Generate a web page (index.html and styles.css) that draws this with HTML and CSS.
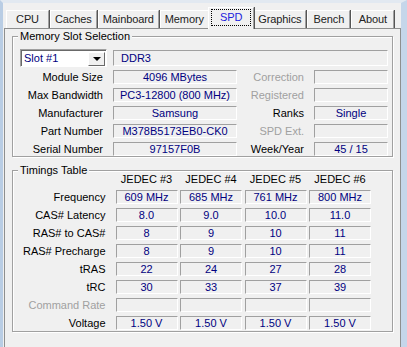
FILE: index.html
```html
<!DOCTYPE html>
<html lang="en">
<head>
    <meta charset="UTF-8">
    <title>CPU-Z SPD</title>
    <link rel="stylesheet" href="styles.css">
</head>
<body>
<div class="window">
    <div class="tabs">
        <div class="tab">CPU</div>
        <div class="tab">Caches</div>
        <div class="tab">Mainboard</div>
        <div class="tab">Memory</div>
        <div class="tab tab-active"><span class="tab-focus">SPD</span></div>
        <div class="tab">Graphics</div>
        <div class="tab">Bench</div>
        <div class="tab">About</div>
    </div>

    <div class="panel">
        <!-- memory slot selection -->
        <div class="group group-slot">
            <span class="group-title">Memory Slot Selection</span>
            <div class="slot-row">
                <div class="combo">
                    <span class="combo-value">Slot #1</span>
                    <span class="combo-button"></span>
                </div>
                <div class="field field-type">DDR3</div>
            </div>
            <div class="module-grid">
                <div class="label">Module Size</div>
                <div class="field">4096 MBytes</div>
                <div class="label label-off">Correction</div>
                <div class="field"></div>

                <div class="label">Max Bandwidth</div>
                <div class="field">PC3-12800 (800 MHz)</div>
                <div class="label label-off">Registered</div>
                <div class="field"></div>

                <div class="label">Manufacturer</div>
                <div class="field">Samsung</div>
                <div class="label">Ranks</div>
                <div class="field">Single</div>

                <div class="label">Part Number</div>
                <div class="field">M378B5173EB0-CK0</div>
                <div class="label label-off">SPD Ext.</div>
                <div class="field"></div>

                <div class="label">Serial Number</div>
                <div class="field">97157F0B</div>
                <div class="label">Week/Year</div>
                <div class="field">45 / 15</div>
            </div>
        </div>

        <!-- timings -->
        <div class="group group-timings">
            <span class="group-title">Timings Table</span>
            <div class="timing-grid">
                <div class="label"></div>
                <div class="head">JEDEC #3</div>
                <div class="head">JEDEC #4</div>
                <div class="head">JEDEC #5</div>
                <div class="head">JEDEC #6</div>

                <div class="label">Frequency</div>
                <div class="field">609 MHz</div>
                <div class="field">685 MHz</div>
                <div class="field">761 MHz</div>
                <div class="field">800 MHz</div>

                <div class="label">CAS# Latency</div>
                <div class="field">8.0</div>
                <div class="field">9.0</div>
                <div class="field">10.0</div>
                <div class="field">11.0</div>

                <div class="label">RAS# to CAS#</div>
                <div class="field">8</div>
                <div class="field">9</div>
                <div class="field">10</div>
                <div class="field">11</div>

                <div class="label">RAS# Precharge</div>
                <div class="field">8</div>
                <div class="field">9</div>
                <div class="field">10</div>
                <div class="field">11</div>

                <div class="label">tRAS</div>
                <div class="field">22</div>
                <div class="field">24</div>
                <div class="field">27</div>
                <div class="field">28</div>

                <div class="label">tRC</div>
                <div class="field">30</div>
                <div class="field">33</div>
                <div class="field">37</div>
                <div class="field">39</div>

                <div class="label label-off">Command Rate</div>
                <div class="field"></div>
                <div class="field"></div>
                <div class="field"></div>
                <div class="field"></div>

                <div class="label">Voltage</div>
                <div class="field">1.50 V</div>
                <div class="field">1.50 V</div>
                <div class="field">1.50 V</div>
                <div class="field">1.50 V</div>
            </div>
        </div>
    </div>
</div>
</body>
</html>
```

FILE: styles.css
```css
* {
    box-sizing: border-box;
}

body {
    margin: 0;
    width: 407px;
    height: 347px;
    overflow: hidden;
    background-color: #f0f0f0;
    font-family: "Liberation Sans", Arial, sans-serif;
    font-size: 11px;
    color: #000;
}

.window {
    height: 347px;
    border-top: 3px solid #e2e9f1;
    border-left: 3px solid #b9cde4;
    border-right: 6px solid #c5d6ea;
    padding-left: 1px;
}

/* tab strip */
.tabs {
    display: flex;
    align-items: flex-end;
    height: 25px;
    padding-left: 2px;
    letter-spacing: -0.1px;
}

.tab {
    min-width: 43px;
    height: 18px;
    padding: 0 4px;
    line-height: 16px;
    text-align: center;
    border-top: 1px solid #fff;
    border-left: 1px solid #fff;
    border-right: 1px solid #a0a0a0;
    box-shadow: 1px 0 0 #555;
    margin-right: 1px;
    color: #222;
}

.tab-active {
    position: relative;
    z-index: 1;
    height: 22px;
    margin: 0 -1px -1px -2px;
    padding: 1px 2px 0 2px;
    background-color: #f0f0f0;
    color: #2222dd;
}

.tab-focus {
    display: block;
    height: 17px;
    padding: 0 8px;
    line-height: 15px;
    border: 1px dotted #000;
}

/* tab page */
.panel {
    border: 1px solid #8e8f8f;
    border-bottom: none;
    height: 320px;
    padding-top: 7px;
}

.group {
    position: relative;
    margin: 0 7px;
    border: 1px solid #a0a0a0;
    box-shadow: inset 1px 1px 0 #fff, 1px 1px 0 #fff;
}

.group-title {
    position: absolute;
    top: -7px;
    left: 5px;
    padding: 0 2px;
    line-height: 13px;
    background-color: #f0f0f0;
}

.group-slot {
    padding-top: 12px;
}

.group-timings {
    margin-top: 13px;
    padding-top: 1px;
    padding-bottom: 1px;
}

.slot-row {
    display: flex;
    align-items: center;
    height: 18px;
    padding-left: 7px;
}

.combo {
    display: flex;
    width: 87px;
    height: 18px;
    border: 1px solid;
    border-color: #a0a0a0 #fff #fff #a0a0a0;
    background-color: #fff;
    box-shadow: inset 1px 1px 0 #696969;
}

.combo-value {
    flex: 1;
    padding-left: 3px;
    line-height: 16px;
    color: #000080;
}

.combo-button {
    display: flex;
    align-items: center;
    justify-content: center;
    width: 17px;
    height: 14px;
    margin: 2px 1px 0 0;
    background-color: #f0f0f0;
    border: 1px solid;
    border-color: #fff #696969 #696969 #fff;
}

.combo-button::before {
    content: "";
    border-left: 4px solid transparent;
    border-right: 4px solid transparent;
    border-top: 4px solid #000;
}

.field {
    height: 14px;
    line-height: 12px;
    text-align: center;
    color: #000080;
    border: 1px solid;
    border-color: #a0a0a0 #fff #fff #a0a0a0;
    white-space: nowrap;
    overflow: hidden;
}

.field-type {
    width: 275px;
    height: 16px;
    line-height: 14px;
    margin-left: 6px;
    text-align: left;
    padding-left: 7px;
}

.label {
    line-height: 14px;
    text-align: right;
    padding-right: 10px;
    white-space: nowrap;
}

.label-off {
    color: #a0a0a0;
}

.module-grid {
    display: grid;
    grid-template-columns: 100px 124px 77px 74px;
    grid-auto-rows: 14px;
    row-gap: 4px;
    margin-top: 3px;
}

.timing-grid {
    display: grid;
    grid-template-columns: 100px repeat(4, 62px);
    grid-auto-rows: 14px;
    column-gap: 2.5px;
    row-gap: 4px;
}

.timing-grid .label {
    padding-right: 10px;
    margin-right: -2.5px;
}

.head {
    line-height: 14px;
    text-align: center;
}
```
